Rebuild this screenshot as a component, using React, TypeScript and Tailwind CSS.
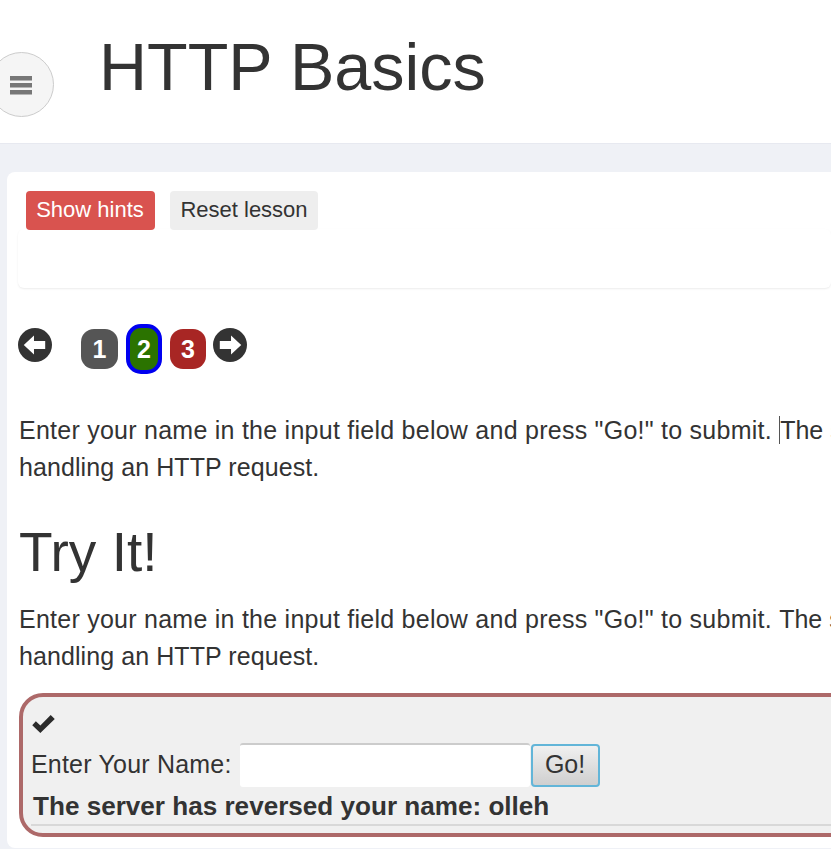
const sentence = 'Enter your name in the input field below and press "Go!" to submit.';
const rest = "The server is";

function ArrowCircle({ points, className }: { points: string; className?: string }) {
  return (
    <svg viewBox="0 0 100 100" className={className}>
      <circle cx="50" cy="50" r="50" fill="#333" />
      <polygon points={points} fill="#fff" />
    </svg>
  );
}

export default function App() {
  return (
    <div className="w-[831px] h-[849px] overflow-hidden bg-[#eff1f6] text-[#333] font-['Liberation_Sans',Arial,sans-serif]">
      {/* Header */}
      <header className="h-[144px] bg-white border-b border-[#e7e9f0] flex">
        <div className="shrink-0 w-[65px] h-[65px] -ml-[11px] mt-[52px] rounded-full border border-[#ccc] bg-[#f5f5f5] flex items-center pl-[20px]">
          <svg viewBox="0 0 22 19" className="w-[22px] h-[19px] mt-[1px]" fill="#777">
            <rect x="0" y="0" width="22" height="4.5" />
            <rect x="0" y="7" width="22" height="4.5" />
            <rect x="0" y="14" width="22" height="4.5" />
          </svg>
        </div>
        <h1 className="ml-[45px] mt-[31px] text-[66.5px] leading-[72px] font-normal whitespace-nowrap">HTTP Basics</h1>
      </header>

      {/* Lesson card */}
      <main className="mt-[28px] ml-[7px] h-[676px] bg-white rounded-l-[8px] overflow-hidden">
        <div className="ml-[11px] h-[116px] relative">
          <div className="absolute left-0 right-0 top-[57px] h-[59px] rounded-[6px] bg-white shadow-[0_1px_2px_rgba(0,0,0,0.08)]" />
          <div className="relative pt-[19px] pl-[8px] flex gap-[15px]">
            <button className="h-[39px] w-[129px] pb-[2px] pr-[1px] rounded-[4px] bg-[#d9534f] text-white text-[22px]">Show hints</button>
            <button className="h-[39px] w-[148px] pb-[2px] rounded-[4px] bg-[#eeeeee] text-[22px]">Reset lesson</button>
          </div>
        </div>

        {/* Pagination */}
        <nav className="mt-[36px] ml-[11px] flex items-start h-[50px]">
          <ArrowCircle points="17,50 47,22 47,38 80,38 80,62 47,62 47,78" className="w-[34px] h-[34px] mt-[4px]" />
          <div className="ml-[29px] mt-[5px] w-[37px] h-[40px] pt-[2px] rounded-[13px] bg-[#555] text-white text-[25px] font-bold flex items-center justify-center">1</div>
          <div className="ml-[8px] w-[36px] h-[50px] pt-[2px] rounded-[15px] border-[4px] border-[#0000f0] bg-[#2b7300] text-white text-[25px] font-bold flex items-center justify-center">2</div>
          <div className="ml-[8px] mt-[5px] w-[36px] h-[40px] pt-[2px] rounded-[13px] bg-[#a82624] text-white text-[25px] font-bold flex items-center justify-center">3</div>
          <ArrowCircle points="83,50 53,22 53,38 20,38 20,62 53,62 53,78" className="ml-[7px] w-[34px] h-[34px] mt-[4px]" />
        </nav>

        {/* Copy */}
        <div className="ml-[12px] w-[1000px]">
          <p className="mt-[38px] text-[25px] leading-[37px]">
            <span className="tracking-[0.25px]">
              {sentence} <span className="border-l border-[#555] tracking-normal">{rest}</span>
            </span>
            <br />
            <span className="tracking-[0.08px]">handling an HTTP request.</span>
          </p>
          <h2 className="mt-[34px] text-[55px] leading-[65px] font-normal">Try It!</h2>
          <p className="mt-[16px] text-[25px] leading-[37px]">
            <span className="tracking-[0.25px]">
              {sentence} <span className="tracking-normal">{rest}</span>
            </span>
            <br />
            <span className="tracking-[0.08px]">handling an HTTP request.</span>
          </p>
        </div>

        {/* Attack form */}
        <div className="mt-[18px] ml-[12px] w-[1000px] h-[144px] rounded-[24px] border-[4px] border-[#ad6969] bg-[#f0f0f0] pl-[8px] pt-[18px]">
          <svg viewBox="0 0 100 80" className="ml-[1px] w-[23px] h-[18px]" fill="#2b2b2b">
            <polygon points="0,46 16,28 36,47 82,0 100,18 36,80" />
          </svg>
          <form className="mt-[10px] flex items-center h-[44px] text-[25px]">
            <label className="tracking-[0.2px]">Enter Your Name:</label>
            <input type="text" className="ml-[8px] w-[290px] h-[44px] bg-white rounded-[3px] border-t-2 border-[#ccc]" />
            <button type="button" className="ml-[1px] w-[69px] h-[43px] rounded-[4px] border-2 border-[#62b5d8] bg-gradient-to-b from-[#f0f0f0] to-[#cfcfcf]">Go!</button>
          </form>
          <div className="mt-[2px] ml-[2px] text-[26.1px] leading-[34px] font-bold whitespace-nowrap">The server has reversed your name: olleh</div>
          <hr className="mt-[1px] border-t-2 border-[#d8d8d8]" />
        </div>
      </main>
    </div>
  );
}
